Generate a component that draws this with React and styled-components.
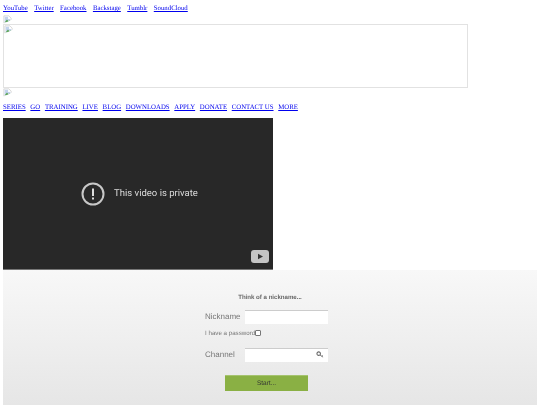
import React from "react";
import styled, { createGlobalStyle } from "styled-components";

const Global = createGlobalStyle`
  html, body { margin: 0; padding: 0; background: #fff; height: 405px; overflow: hidden; }
  body { font-family: "Liberation Serif", serif; text-rendering: geometricPrecision; }
`;
const Page = styled.div`
  width: 540px; height: 405px; overflow: hidden; padding: 4px 3px 0; box-sizing: border-box;
  display: flex; flex-direction: column; will-change: transform;
`;
const LinkRow = styled.div`
  display: flex; gap: ${p => p.$gap}px; height: 9px; align-items: center; flex: none;
  font-size: 6.8px; line-height: 9px; margin-top: ${p => p.$mt || 0}px;
`;
const TextLink = styled.a`
  color: #0000ee; text-decoration: underline; white-space: pre;
`;
const Broken = styled.svg`
  display: block; width: 9px; height: 9px; flex: none; margin-top: ${p => p.$mt || 0}px;
`;
const BannerBox = styled.div`
  width: 465px; height: 64px; flex: none; box-sizing: border-box; border: 1px solid #e2e2e2; background: #fff;
`;
const Video = styled.div`
  width: 270px; height: 152px; flex: none; margin-top: 6px; background: #282828; position: relative;
  display: flex; align-items: center; justify-content: center; gap: 9px; padding-left: 3px; box-sizing: border-box;
  border-bottom: 1px solid #777;
`;
const Message = styled.div`
  font-family: Roboto, sans-serif; font-size: 9.5px; color: #dcdcdc; white-space: nowrap;
`;
const YtMark = styled.svg`
  position: absolute; right: 4px; bottom: 6px; width: 18px; height: 13px;
`;
const Form = styled.div`
  width: 534px; height: 135px; flex: none; box-sizing: border-box; padding-top: 24px;
  background: linear-gradient(#f8f8f8, #e6e6e6);
  font-family: "Liberation Sans", Arial, sans-serif; color: #666;
  display: flex; flex-direction: column; align-items: center;
`;
const Title = styled.div`
  font-size: 6.1px; font-weight: bold; line-height: 8px; color: #666; text-align: center;
`;
const Fields = styled.div`
  width: 123px; margin-right: 7px; display: flex; flex-direction: column; margin-top: 8px;
`;
const FieldRow = styled.div`
  display: flex; align-items: center; height: 14px; margin-top: ${p => p.$mt || 0}px;
`;
const FieldLabel = styled.label`
  width: 40px; flex: none; font-size: 8px; line-height: 11px; color: #777; padding-bottom: 1px;
`;
const Input = styled.div`
  width: 83px; height: 14px; box-sizing: border-box; background: #fff; border-top: 1px solid #ccc;
  position: relative;
`;
const Key = styled.svg`
  position: absolute; right: 4px; top: 2px; width: 8px; height: 7px;
`;
const PassRow = styled.div`
  display: flex; align-items: center; height: 8px; margin-top: 5px; font-size: 6.2px; color: #777;
`;
const Check = styled.span`
  display: block; width: 6px; height: 6px; box-sizing: border-box; border: 1px solid #777; border-radius: 1px; background: #fff;
`;
const Start = styled.div`
  width: 83px; height: 16px; margin-top: 13px; margin-right: 7px; background: #8ab044; border-top: 1px solid #a5c36e;
  box-sizing: border-box; color: #333; font-size: 6.5px; display: flex; align-items: center; justify-content: center;
`;

const BrokenIcon = ({ mt }) => (
  <Broken viewBox="0 0 16 16" $mt={mt}>
    <path d="M1.5 1.5h9l4 4v9h-13z" fill="#fff" stroke="#bdbdbd" />
    <path d="M3 3h6v4h4v6H3z" fill="#c3d3ee" />
    <path d="M3 13l4-5 3 3 3-2v4z" fill="#5fa65a" />
    <path d="M0 16L16 8v8z" fill="#fff" />
  </Broken>
);

const top = ["YouTube", "Twitter", "Facebook", "Backstage", "Tumblr", "SoundCloud"];
const nav = ["SERIES", "GO", "TRAINING", "LIVE", "BLOG", "DOWNLOADS", "APPLY", "DONATE", "CONTACT US", "MORE"];

export default function App() {
  return (
    <Page>
      <Global />
      <LinkRow $gap={6.4}>
        {top.map(t => <TextLink key={t}>{t}</TextLink>)}
      </LinkRow>
      <BrokenIcon mt={2} />
      <BannerBox><BrokenIcon /></BannerBox>
      <BrokenIcon />
      <LinkRow $gap={4.7} $mt={6}>
        {nav.map(t => <TextLink key={t}>{t}</TextLink>)}
      </LinkRow>
      <Video>
        <svg width="24" height="24" viewBox="0 0 24 24">
          <circle cx="12" cy="12" r="10.5" fill="none" stroke="#c8c8c8" strokeWidth="2" />
          <rect x="11" y="6.5" width="2" height="7.5" fill="#dcdcdc" />
          <rect x="11" y="15.5" width="2" height="2" fill="#dcdcdc" />
        </svg>
        <Message>This video is private</Message>
        <YtMark viewBox="0 0 18 13">
          <rect width="18" height="13" rx="3" fill="#c4c4c4" />
          <path d="M7 3.8l5 2.7-5 2.7z" fill="#333" />
        </YtMark>
      </Video>
      <Form>
        <Title>Think of a nickname...</Title>
        <Fields>
          <FieldRow><FieldLabel>Nickname</FieldLabel><Input /></FieldRow>
          <PassRow>I have a password<Check /></PassRow>
          <FieldRow $mt={11}>
            <FieldLabel>Channel</FieldLabel>
            <Input>
              <Key viewBox="0 0 9 8">
                <circle cx="3" cy="3" r="2" fill="none" stroke="#666" strokeWidth="1.2" />
                <path d="M4.5 4.5L8 7M6.5 6L7.5 5" stroke="#666" strokeWidth="1" fill="none" />
              </Key>
            </Input>
          </FieldRow>
        </Fields>
        <Start>Start...</Start>
      </Form>
    </Page>
  );
}
